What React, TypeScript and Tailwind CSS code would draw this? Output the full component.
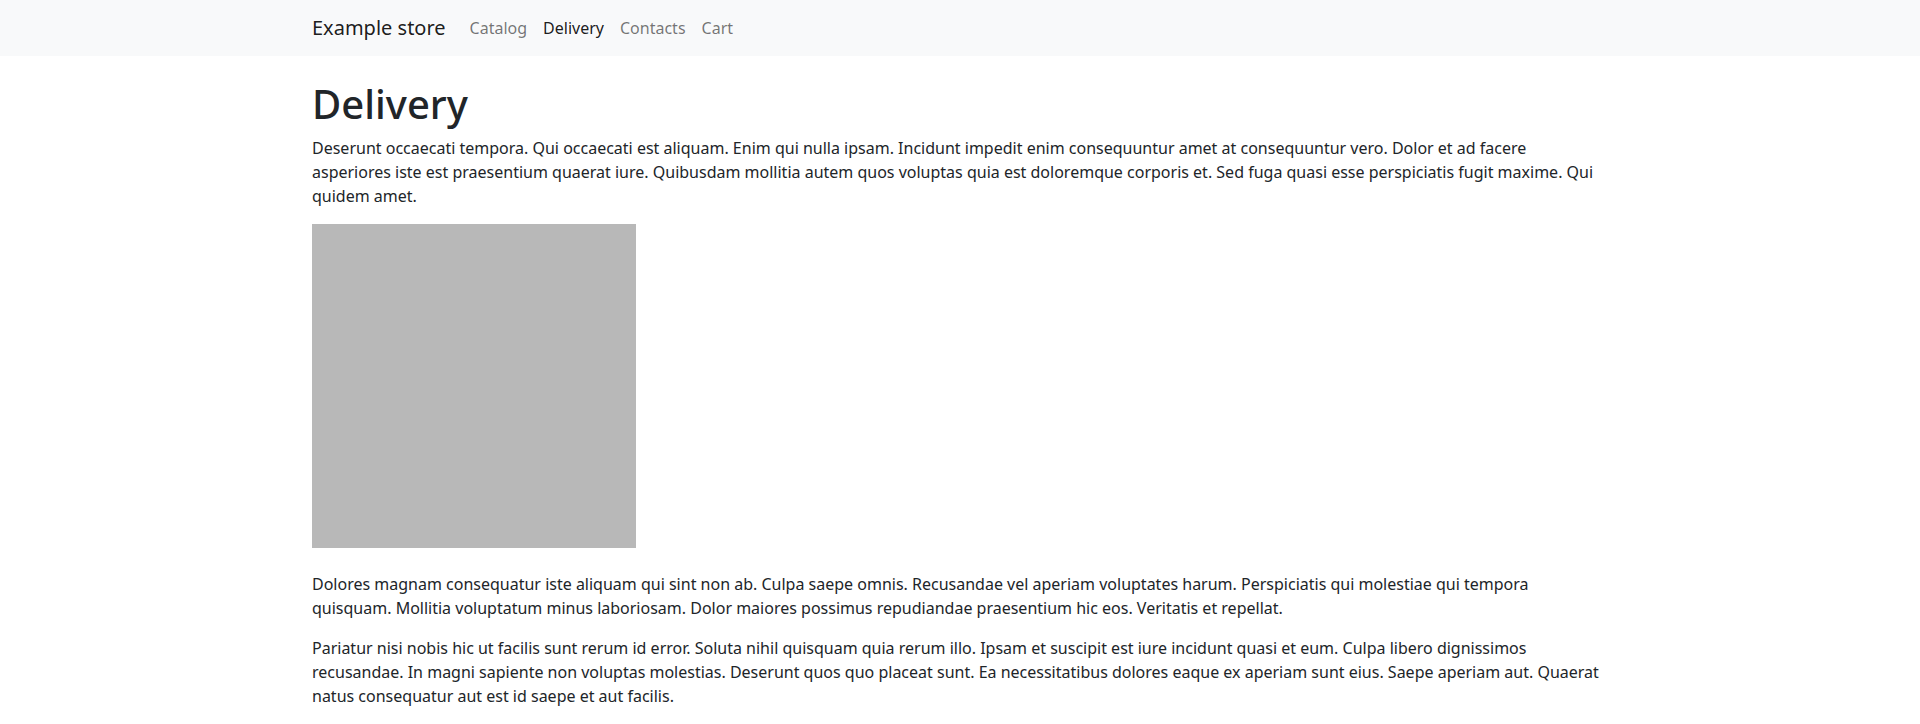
import React from 'react';

const links = [
  { label: 'Catalog', active: false },
  { label: 'Delivery', active: true },
  { label: 'Contacts', active: false },
  { label: 'Cart', active: false },
];

const Navbar: React.FC = () => (
  <nav className="bg-[#f8f9fa]">
    <div className="mx-auto flex h-14 max-w-[1320px] items-center px-3">
      <a href="#" className="mr-4 py-[5px] text-[20px] leading-[30px] text-[rgba(0,0,0,0.9)]">
        Example store
      </a>
      <ul className="flex">
        {links.map((link) => (
          <li key={link.label}>
            <a
              href="#"
              className={
                link.active
                  ? 'block px-2 py-2 text-base leading-6 text-[rgba(0,0,0,0.9)]'
                  : 'block px-2 py-2 text-base leading-6 text-[rgba(0,0,0,0.55)]'
              }
            >
              {link.label}
            </a>
          </li>
        ))}
      </ul>
    </div>
  </nav>
);

export default function App() {
  return (
    <div className="min-h-screen bg-white font-['Noto_Sans',sans-serif] text-[#212529]">
      <Navbar />
      <main className="mx-auto max-w-[1320px] px-3">
        <h1 className="mt-6 mb-2 text-[40px] font-medium leading-[48px]">Delivery</h1>
        <p className="mb-4 text-base leading-6">
          Deserunt occaecati tempora. Qui occaecati est aliquam. Enim qui nulla ipsam. Incidunt impedit enim
          consequuntur amet at consequuntur vero. Dolor et ad facere asperiores iste est praesentium quaerat iure.
          Quibusdam mollitia autem quos voluptas quia est doloremque corporis et. Sed fuga quasi esse perspiciatis
          fugit maxime. Qui quidem amet.
        </p>
        <div className="mb-6 h-[324px] w-[324px] bg-[#b8b8b8]" />
        <p className="mb-4 text-base leading-6">
          Dolores magnam consequatur iste aliquam qui sint non ab. Culpa saepe omnis. Recusandae vel aperiam
          voluptates harum. Perspiciatis qui molestiae qui tempora quisquam. Mollitia voluptatum minus laboriosam.
          Dolor maiores possimus repudiandae praesentium hic eos. Veritatis et repellat.
        </p>
        <p className="mb-4 text-base leading-6">
          Pariatur nisi nobis hic ut facilis sunt rerum id error. Soluta nihil quisquam quia rerum illo. Ipsam et
          suscipit est iure incidunt quasi et eum. Culpa libero dignissimos recusandae. In magni sapiente non
          voluptas molestias. Deserunt quos quo placeat sunt. Ea necessitatibus dolores eaque ex aperiam sunt eius.
          Saepe aperiam aut. Quaerat natus consequatur aut est id saepe et aut facilis.
        </p>
      </main>
    </div>
  );
}
